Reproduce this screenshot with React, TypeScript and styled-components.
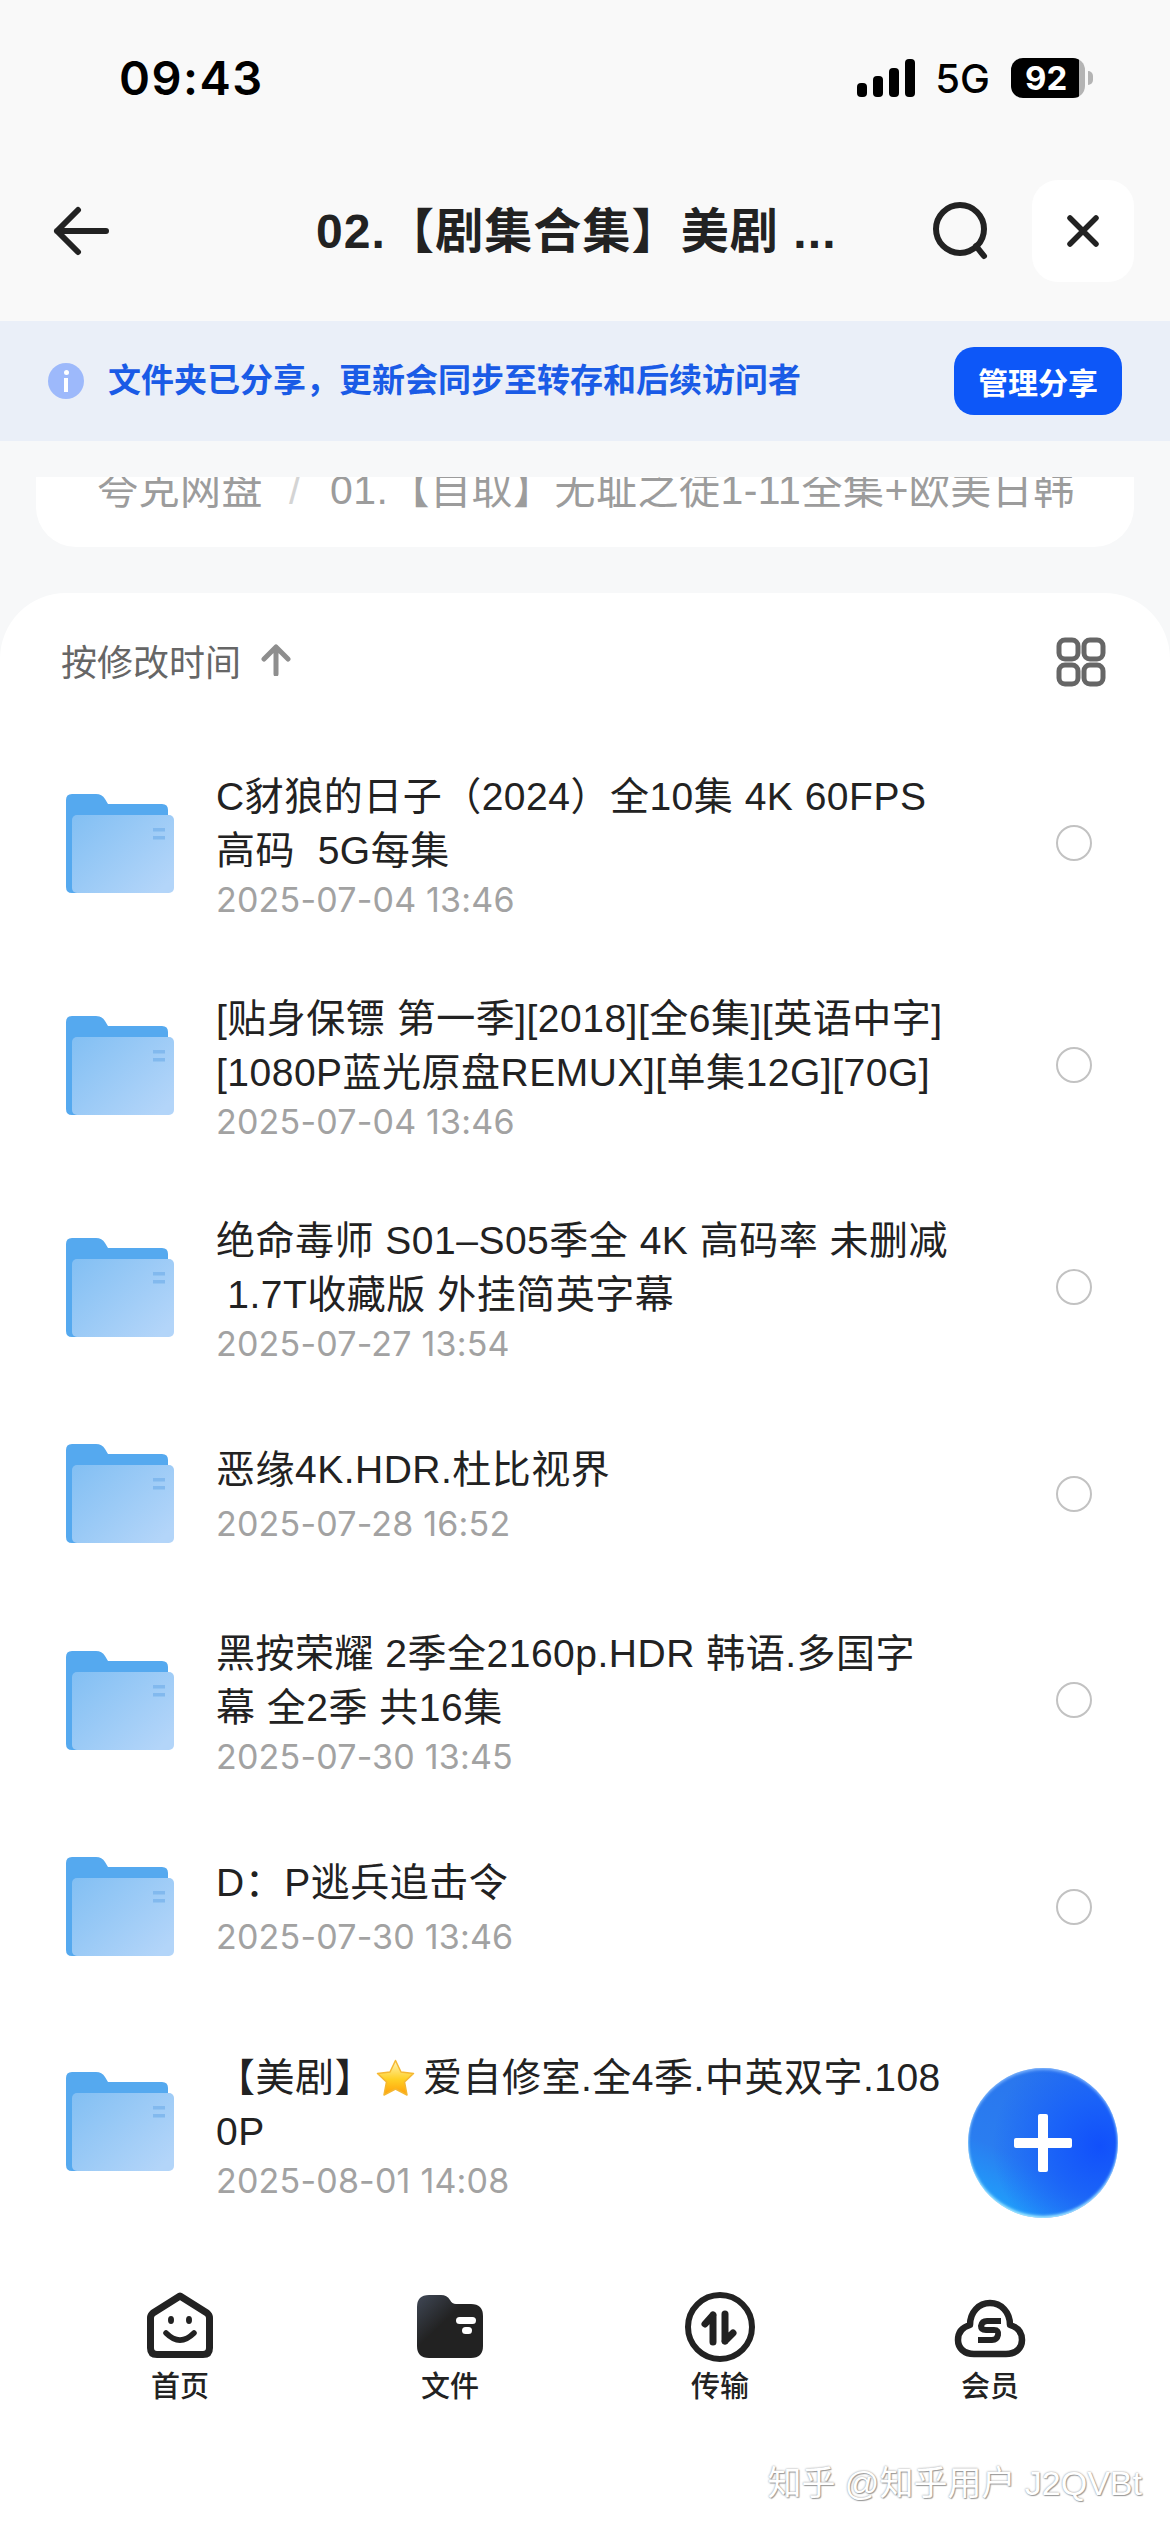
import React from 'react';
import styled, { createGlobalStyle } from 'styled-components';

const GlobalStyle = createGlobalStyle`
  html, body {
    margin: 0;
    padding: 0;
    background: #ffffff;
  }
  * {
    box-sizing: border-box;
  }
`;

const sans = `"Liberation Sans", "Noto Sans CJK SC", sans-serif`;
const inter = `Inter, "Noto Sans CJK SC", sans-serif`;

const Page = styled.div`
  position: relative;
  width: 1170px;
  height: 2532px;
  overflow: hidden;
  display: flex;
  flex-direction: column;
  background: #f9f9f9;
  font-family: ${sans};
  color: #222222;
`;

const StatusBar = styled.div`
  height: 156px;
  display: flex;
  align-items: center;
  padding: 0 85px 0 119px;
  flex-shrink: 0;
`;

const Clock = styled.div`
  font-family: ${inter};
  font-size: 47px;
  font-weight: 600;
  color: #000000;
  letter-spacing: 1.5px;
  margin-top: -2px;
`;

const StatusRight = styled.div`
  margin-left: auto;
  display: flex;
  align-items: center;
`;

const Network = styled.span`
  font-family: ${inter};
  font-size: 40px;
  font-weight: 500;
  color: #000000;
  margin: 0 21px 0 20px;
`;

const Battery = styled.div`
  position: relative;
  width: 74px;
  height: 40px;
  border-radius: 12px;
  background: linear-gradient(90deg, #000000 92%, #b4b4b4 92%);
  color: #ffffff;
  font-family: ${inter};
  font-size: 33px;
  font-weight: 700;
  line-height: 40px;
  padding-left: 14px;

  &::after {
    content: '';
    position: absolute;
    right: -8px;
    top: 13px;
    width: 5px;
    height: 14px;
    border-radius: 0 5px 5px 0;
    background: #b4b4b4;
  }
`;

const NavBar = styled.div`
  margin-top: 24px;
  height: 102px;
  display: flex;
  align-items: center;
  padding: 0 36px 0 50px;
  flex-shrink: 0;
`;

const NavTitle = styled.div`
  margin-left: 204px;
  margin-top: 2px;
  font-size: 48px;
  font-weight: 700;
  line-height: 60px;
  letter-spacing: 1.1px;
  white-space: pre;
`;

const SearchButton = styled.div`
  margin-left: auto;
  margin-right: 41px;
  display: flex;
`;

const CloseButton = styled.div`
  width: 102px;
  height: 102px;
  border-radius: 26px;
  background: #ffffff;
  display: flex;
  align-items: center;
  justify-content: center;
`;

const ShareBanner = styled.div`
  margin-top: 39px;
  height: 120px;
  display: flex;
  align-items: center;
  padding: 0 48px;
  background: #eaeff8;
  flex-shrink: 0;
`;

const InfoDot = styled.div`
  width: 36px;
  height: 36px;
  border-radius: 50%;
  background: #9db9fb;
  display: flex;
  flex-direction: column;
  align-items: center;
  justify-content: center;
  gap: 3px;

  &::before {
    content: '';
    width: 5px;
    height: 5px;
    border-radius: 50%;
    background: #ffffff;
  }
  &::after {
    content: '';
    width: 4px;
    height: 14px;
    background: #ffffff;
  }
`;

const BannerText = styled.div`
  margin-left: 24px;
  font-size: 33px;
  font-weight: 700;
  color: #1a5be6;
  line-height: 44px;
  white-space: pre;
`;

const ManageButton = styled.div`
  margin-left: auto;
  width: 168px;
  height: 68px;
  border-radius: 20px;
  background: #0d57f8;
  color: #ffffff;
  font-size: 30px;
  font-weight: 700;
  display: flex;
  align-items: center;
  justify-content: center;
`;

const CrumbArea = styled.div`
  height: 152px;
  padding: 36px 36px 0;
  background: #f7f8f9;
  flex-shrink: 0;
`;

const CrumbCard = styled.div`
  height: 70px;
  padding-left: 61px;
  overflow: hidden;
  display: flex;
  background: #ffffff;
  border-radius: 0 0 40px 40px;
  color: #9c9c9c;
  font-size: 41px;
  line-height: 50px;
  letter-spacing: 0.5px;
  white-space: pre;
`;

const CrumbText = styled.span`
  margin-top: -12px;
`;

const CrumbSlash = styled.span`
  margin: -12px 29px 0 26px;
  color: #d4d4d4;
`;

const Sheet = styled.div`
  flex: 1;
  min-height: 0;
  display: flex;
  flex-direction: column;
  background: #f7f8f9;
`;

const SheetBody = styled.div`
  flex: 1;
  min-height: 0;
  display: flex;
  flex-direction: column;
  background: #ffffff;
  border-radius: 66px 66px 0 0;
`;

const SortBar = styled.div`
  height: 139px;
  display: flex;
  align-items: center;
  padding: 0 64px 6px 61px;
  color: #666666;
  font-size: 36px;
  flex-shrink: 0;
`;

const SortArrow = styled.div`
  display: flex;
  margin-left: 20px;
`;

const ViewToggle = styled.div`
  margin-left: auto;
  margin-top: 4px;
  display: flex;
`;

const FileList = styled.div`
  flex: 1;
  min-height: 0;
  overflow: hidden;
  display: flex;
  flex-direction: column;
`;

const FolderBox = styled.div`
  width: 108px;
  height: 99px;
  flex-shrink: 0;
  display: flex;
`;

const FileText = styled.div<{ $single: boolean }>`
  margin-left: 42px;
  padding-top: ${(p) => (p.$single ? 2 : 6)}px;
  display: flex;
  flex-direction: column;
`;

const FileRow = styled.div<{ $tall: boolean }>`
  height: ${(p) => (p.$tall ? 222 : 191)}px;
  display: flex;
  align-items: center;
  padding: 0 78px 0 66px;
  flex-shrink: 0;

  &:last-child {
    margin-top: 8px;
  }
  &:last-child ${FileText} {
    padding-top: 12px;
  }
`;

const FileTitle = styled.div`
  font-size: 39px;
  line-height: 54px;
  height: 54px;
  letter-spacing: 0.5px;
  white-space: pre;
  color: #222222;
  display: flex;
  align-items: center;
`;

const FileDate = styled.div<{ $single: boolean }>`
  margin-top: ${(p) => (p.$single ? 5 : 0)}px;
  font-family: ${inter};
  font-size: 34px;
  line-height: 44px;
  letter-spacing: 0.2px;
  color: #a2a2a2;
  white-space: pre;
`;

const Radio = styled.div`
  margin-left: auto;
  width: 36px;
  height: 36px;
  border-radius: 50%;
  border: 2.5px solid #c2c2c2;
  flex-shrink: 0;
`;

const StarBox = styled.span`
  display: inline-flex;
  margin: 0 8px 0 2px;
`;

const TabBar = styled.div`
  height: 257px;
  display: grid;
  grid-template-columns: repeat(4, 270px);
  padding: 15px 45px 0;
  flex-shrink: 0;
  background: #ffffff;
`;

const TabItem = styled.div`
  display: flex;
  flex-direction: column;
  align-items: center;
`;

const TabIcon = styled.div`
  width: 72px;
  height: 72px;
  display: flex;
`;

const TabLabel = styled.div`
  margin-top: 5px;
  font-size: 29px;
  font-weight: 500;
  line-height: 40px;
  color: #222222;
`;

const AddButton = styled.div`
  position: absolute;
  left: 968px;
  top: 2068px;
  width: 150px;
  height: 150px;
  border-radius: 50%;
  background: radial-gradient(circle at 88% 52%, #1150fb 0%, #1a62f8 30%, rgba(34, 120, 240, 0) 70%),
    linear-gradient(25deg, #1fa3fc 8%, #2a7df0 38%, #2a72ec 100%);
  box-shadow: inset 0 -2px 3px #a5ecff, inset 0 2px 3px rgba(140, 190, 255, 0.8);

  &::before,
  &::after {
    content: '';
    position: absolute;
    background: #ffffff;
    border-radius: 2px;
  }
  &::before {
    left: 46px;
    top: 70px;
    width: 58px;
    height: 10px;
  }
  &::after {
    left: 70px;
    top: 46px;
    width: 10px;
    height: 58px;
  }
`;

const Watermark = styled.div`
  position: absolute;
  right: 28px;
  bottom: 27px;
  font-size: 34px;
  line-height: 44px;
  color: #ffffff;
  text-shadow: 0 0 2px #8a8a8a, 1px 1px 1px #a0a0a0;
  white-space: pre;
`;

const FolderIcon = ({ id }: { id: number }) => (
  <svg width="108" height="99" viewBox="0 0 108 99">
    <defs>
      <linearGradient id={`fold${id}`} x1="0" y1="0" x2="1" y2="0.8">
        <stop offset="0" stopColor="#82bff3" />
        <stop offset="1" stopColor="#b3d5f9" />
      </linearGradient>
    </defs>
    <path
      d="M6 0H30Q36 0 39 5L42 10H96Q102 10 102 16V93Q102 99 96 99H6Q0 99 0 93V6Q0 0 6 0Z"
      fill="#55a9ef"
    />
    <rect x="6" y="21" width="102" height="78" rx="5" fill={`url(#fold${id})`} />
    <rect x="87" y="34" width="12" height="3.5" fill="#82b9ee" />
    <rect x="87" y="42" width="12" height="3.5" fill="#82b9ee" />
  </svg>
);

const Star = () => (
  <svg width="39" height="38" viewBox="0 0 39 38">
    <defs>
      <linearGradient id="starFill" x1="0" y1="0" x2="0" y2="1">
        <stop offset="0" stopColor="#fff3b8" />
        <stop offset="0.55" stopColor="#ffd024" />
        <stop offset="1" stopColor="#ff9f0a" />
      </linearGradient>
    </defs>
    <path
      d="M19.5 1.5L25 13L37.5 14.5L28.5 23L31 36L19.5 30L8 36L10.5 23L1.5 14.5L14 13Z"
      fill="url(#starFill)"
      stroke="#f5b731"
      strokeWidth="1.5"
      strokeLinejoin="round"
    />
  </svg>
);

type FileItem = {
  lines: React.ReactNode[];
  date: string;
  radio?: boolean;
};

const files: FileItem[] = [
  { lines: ['C豺狼的日子（2024）全10集 4K 60FPS', '高码  5G每集'], date: '2025-07-04 13:46', radio: true },
  { lines: ['[贴身保镖 第一季][2018][全6集][英语中字]', '[1080P蓝光原盘REMUX][单集12G][70G]'], date: '2025-07-04 13:46', radio: true },
  { lines: ['绝命毒师 S01–S05季全 4K 高码率 未删减', ' 1.7T收藏版 外挂简英字幕'], date: '2025-07-27 13:54', radio: true },
  { lines: ['恶缘4K.HDR.杜比视界'], date: '2025-07-28 16:52', radio: true },
  { lines: ['黑按荣耀 2季全2160p.HDR 韩语.多国字', '幕 全2季 共16集'], date: '2025-07-30 13:45', radio: true },
  { lines: ['D：P逃兵追击令'], date: '2025-07-30 13:46', radio: true },
  {
    lines: [
      <>
        【美剧】
        <StarBox>
          <Star />
        </StarBox>
        爱自修室.全4季.中英双字.108
      </>,
      '0P',
    ],
    date: '2025-08-01 14:08',
  },
];

const tabs = [
  {
    label: '首页',
    icon: (
      <svg width="72" height="72" viewBox="0 0 72 72" fill="none" stroke="#222" strokeLinecap="round" strokeLinejoin="round">
        <path d="M36 6L63 23Q65.5 25 65.5 28V58Q65.5 64.5 59 64.5H13Q6.5 64.5 6.5 58V28Q6.5 25 9 23Z" strokeWidth="7" />
        <ellipse cx="27" cy="30" rx="3" ry="4" fill="#222" stroke="none" />
        <ellipse cx="45" cy="30" rx="3" ry="4" fill="#222" stroke="none" />
        <path d="M22 43Q36 57 50 43" strokeWidth="5.5" />
      </svg>
    ),
  },
  {
    label: '文件',
    icon: (
      <svg width="72" height="72" viewBox="0 0 72 72">
        <defs>
          <linearGradient id="tabFolder" x1="0" y1="0" x2="0.7" y2="0.7">
            <stop offset="0.1" stopColor="#3b424e" />
            <stop offset="0.6" stopColor="#222222" />
          </linearGradient>
        </defs>
        <path d="M15 5H27Q33 5 36 10Q38 14 42 14H57Q69 14 69 26V56Q69 68 57 68H15Q3 68 3 56V17Q3 5 15 5Z" fill="url(#tabFolder)" />
        <rect x="42" y="27" width="20" height="7" rx="3.5" fill="#fff" />
        <rect x="48" y="37" width="10" height="7" rx="3.5" fill="#fff" />
      </svg>
    ),
  },
  {
    label: '传输',
    icon: (
      <svg width="72" height="72" viewBox="0 0 72 72" fill="none" stroke="#222" strokeLinecap="round" strokeLinejoin="round">
        <circle cx="36" cy="37" r="32" strokeWidth="6" />
        <path d="M29 25V52M29 25L21 34" strokeWidth="7" />
        <path d="M41 24V51M41 51L49 43" strokeWidth="7" />
      </svg>
    ),
  },
  {
    label: '会员',
    icon: (
      <svg width="72" height="72" viewBox="0 0 72 72" fill="none" stroke="#222" strokeLinecap="round" strokeLinejoin="round">
        <path d="M20 64H52C62 64 68 58 68 50C68 42 63 37 56 35C56 22 47 13 36 13C25 13 16 22 16 35C9 37 4 42 4 50C4 58 10 64 20 64Z" strokeWidth="6.5" />
        <path d="M47 31H33Q28 31 27 36Q27 40 32 40H40Q45 40 44 45Q43 50 38 50H24" strokeWidth="6" strokeLinecap="butt" />
      </svg>
    ),
  },
];

export default function App() {
  return (
    <Page>
      <GlobalStyle />
      <StatusBar>
        <Clock>09:43</Clock>
        <StatusRight>
          <svg width="58" height="38" viewBox="0 0 58 38" fill="#000">
            <rect x="0" y="24" width="10" height="14" rx="4" />
            <rect x="16" y="17" width="10" height="21" rx="4" />
            <rect x="32" y="9" width="10" height="29" rx="4" />
            <rect x="48" y="0" width="10" height="38" rx="4" />
          </svg>
          <Network>5G</Network>
          <Battery>92</Battery>
        </StatusRight>
      </StatusBar>

      <NavBar>
        <svg width="62" height="56" viewBox="0 0 62 56" fill="none" stroke="#222" strokeWidth="6" strokeLinecap="round" strokeLinejoin="round">
          <path d="M7 28H56M28 7L7 28L28 49" />
        </svg>
        <NavTitle>02.【剧集合集】美剧 ...</NavTitle>
        <SearchButton>
          <svg width="60" height="58" viewBox="0 0 60 58" fill="none" stroke="#222" strokeWidth="6" strokeLinecap="round">
            <circle cx="29" cy="27" r="24" />
            <path d="M45 44L53 54" />
          </svg>
        </SearchButton>
        <CloseButton>
          <svg width="34" height="34" viewBox="0 0 34 34" fill="none" stroke="#222" strokeWidth="5.5" strokeLinecap="round">
            <path d="M4 4L30 30M30 4L4 30" />
          </svg>
        </CloseButton>
      </NavBar>

      <ShareBanner>
        <InfoDot />
        <BannerText>文件夹已分享，更新会同步至转存和后续访问者</BannerText>
        <ManageButton>管理分享</ManageButton>
      </ShareBanner>

      <CrumbArea>
        <CrumbCard>
          <CrumbText>夸克网盘</CrumbText>
          <CrumbSlash>/</CrumbSlash>
          <CrumbText>01.【自取】无耻之徒1-11全集+欧美日韩</CrumbText>
        </CrumbCard>
      </CrumbArea>

      <Sheet>
        <SheetBody>
          <SortBar>
            按修改时间
            <SortArrow>
              <svg width="30" height="32" viewBox="0 0 30 32" fill="none" stroke="#8e8e8e" strokeWidth="5" strokeLinecap="round" strokeLinejoin="round">
                <path d="M15 3V30M3 15L15 3L27 15" />
              </svg>
            </SortArrow>
            <ViewToggle>
              <svg width="50" height="50" viewBox="0 0 50 50" fill="none" stroke="#666" strokeWidth="5">
                <rect x="3" y="3" width="19" height="19" rx="6" />
                <rect x="28" y="3" width="19" height="19" rx="6" />
                <rect x="3" y="28" width="19" height="19" rx="6" />
                <rect x="28" y="28" width="19" height="19" rx="6" />
              </svg>
            </ViewToggle>
          </SortBar>

          <FileList>
            {files.map((file, i) => (
              <FileRow key={i} $tall={file.lines.length > 1}>
                <FolderBox>
                  <FolderIcon id={i} />
                </FolderBox>
                <FileText $single={file.lines.length === 1}>
                  {file.lines.map((line, j) => (
                    <FileTitle key={j}>{line}</FileTitle>
                  ))}
                  <FileDate $single={file.lines.length === 1}>{file.date}</FileDate>
                </FileText>
                {file.radio && <Radio />}
              </FileRow>
            ))}
          </FileList>

          <TabBar>
            {tabs.map((tab) => (
              <TabItem key={tab.label}>
                <TabIcon>{tab.icon}</TabIcon>
                <TabLabel>{tab.label}</TabLabel>
              </TabItem>
            ))}
          </TabBar>
        </SheetBody>
      </Sheet>

      <AddButton />
      <Watermark>知乎 @知乎用户 J2QVBt</Watermark>
    </Page>
  );
}
